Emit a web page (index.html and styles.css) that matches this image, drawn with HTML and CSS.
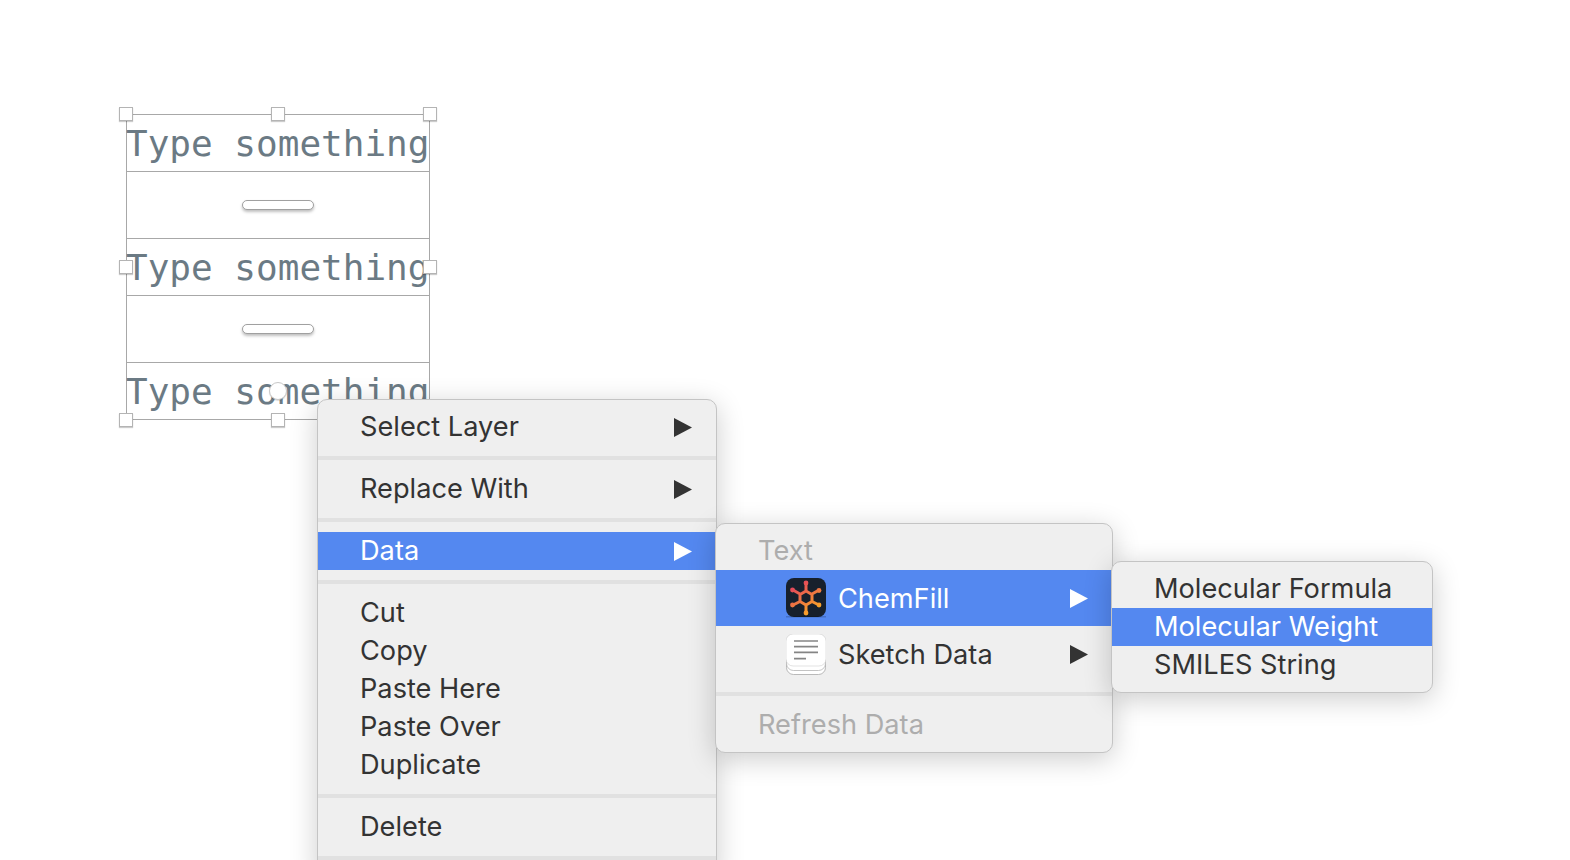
FILE: index.html
```html
<!DOCTYPE html>
<html lang="en">
<head>
  <meta charset="UTF-8" />
  <title>ChemFill context menu</title>
  <link rel="stylesheet" href="styles.css">
</head>
<body>
  <!-- Selected layer group on the canvas -->
  <div class="selection">
    <div class="text-row">Type something</div>
    <div class="pill-row"><span class="pill"></span></div>
    <div class="text-row">Type something</div>
    <div class="pill-row"><span class="pill"></span></div>
    <div class="text-row last">Type something</div>
    <span class="handle h-tl"></span>
    <span class="handle h-tc"></span>
    <span class="handle h-tr"></span>
    <span class="handle h-ml"></span>
    <span class="handle h-mr"></span>
    <span class="handle h-bl"></span>
    <span class="handle h-bc"></span>
    <span class="rotate"></span>
  </div>

  <!-- Main context menu -->
  <div class="menu menu-main">
    <div class="item">Select Layer
      <svg class="arrow" viewBox="0 0 18 19"><polygon points="0,0 18,9.5 0,19" /></svg>
    </div>
    <div class="sep"></div>
    <div class="item">Replace With
      <svg class="arrow" viewBox="0 0 18 19"><polygon points="0,0 18,9.5 0,19" /></svg>
    </div>
    <div class="sep"></div>
    <div class="item active">Data
      <svg class="arrow" viewBox="0 0 18 19"><polygon points="0,0 18,9.5 0,19" /></svg>
    </div>
    <div class="sep"></div>
    <div class="item">Cut</div>
    <div class="item">Copy</div>
    <div class="item">Paste Here</div>
    <div class="item">Paste Over</div>
    <div class="item">Duplicate</div>
    <div class="sep"></div>
    <div class="item">Delete</div>
    <div class="sep"></div>
  </div>

  <!-- Data submenu -->
  <div class="menu menu-data">
    <div class="item disabled">Text</div>
    <div class="item tall active">
      <svg class="app-icon" viewBox="0 0 40 41">
        <defs>
          <linearGradient id="chem" gradientUnits="userSpaceOnUse" x1="6" y1="5" x2="26" y2="36">
            <stop offset="0" stop-color="#e23c62" />
            <stop offset="1" stop-color="#fba925" />
          </linearGradient>
        </defs>
        <rect x="0" y="0" width="40" height="39" rx="8" fill="#17202c" />
        <rect x="0" y="38" width="40" height="1.5" fill="#000" opacity="0.18" />
        <g fill="url(#chem)">
          <path fill="none" stroke="url(#chem)" stroke-width="3" d="M20 5V13M7 12L14 16M33 12L26 16M7 27L14 23.5M33 27L26 23.5M20 35V26.5M20 13L26 16.5V23.5L20 27L14 23.5V16.5Z" />
          <circle cx="20" cy="5" r="2.4" />
          <circle cx="6.5" cy="12" r="2.4" />
          <circle cx="33" cy="12.5" r="2.4" />
          <circle cx="6.5" cy="27" r="2.4" />
          <circle cx="33" cy="27" r="2.4" />
          <circle cx="20" cy="35" r="2.4" />
        </g>
      </svg>
      ChemFill
      <svg class="arrow" viewBox="0 0 18 19"><polygon points="0,0 18,9.5 0,19" /></svg>
    </div>
    <div class="item tall">
      <svg class="app-icon" viewBox="0 0 40 41">
        <rect x="0.5" y="10" width="39" height="30.5" rx="7" fill="#fff" stroke="#a8a8a8" stroke-width="0.8" />
        <rect x="0.5" y="6" width="39" height="30.5" rx="7" fill="#fff" stroke="#b4b4b4" stroke-width="0.8" />
        <rect x="0" y="0" width="40" height="32" rx="7" fill="#fff" stroke="#c4c4c4" stroke-width="0.5" />
        <path stroke="#858585" stroke-width="1.7" d="M8 7H32M8 12.7H32M8 18.3H32M8 24.7H20" />
      </svg>
      Sketch Data
      <svg class="arrow" viewBox="0 0 18 19"><polygon points="0,0 18,9.5 0,19" /></svg>
    </div>
    <div class="sep"></div>
    <div class="item disabled">Refresh Data</div>
  </div>

  <!-- ChemFill submenu -->
  <div class="menu menu-chem">
    <div class="item">Molecular Formula</div>
    <div class="item active">Molecular Weight</div>
    <div class="item">SMILES String</div>
  </div>
</body>
</html>
```

FILE: styles.css
```css
html, body {
  height: 860px;
  margin: 0;
  overflow: hidden;
  background-color: #ffffff;
}
body {
  position: relative;
  font-family: Inter, "Liberation Sans", sans-serif;
}

/* Selection on the canvas */
.selection {
  position: absolute;
  left: 126px;
  top: 114px;
  width: 302px;
  border: 1px solid #a8a8a8;
}
.text-row {
  height: 56px;
  border-bottom: 1px solid #a8a8a8;
  font-family: "DejaVu Sans Mono", monospace;
  font-size: 36px;
  line-height: 58px;
  text-indent: -1px;
  color: #6b7a84;
  white-space: nowrap;
}
.text-row.last {
  border-bottom: 0;
}
.pill-row {
  display: flex;
  align-items: center;
  justify-content: center;
  height: 66px;
  border-bottom: 1px solid #a8a8a8;
}
.pill {
  width: 70px;
  height: 8px;
  background-color: #ffffff;
  border: 1px solid #a0a0a0;
  border-radius: 5px;
  box-shadow: 0 2px 3px rgba(0, 0, 0, 0.25);
}
.handle {
  position: absolute;
  width: 12px;
  height: 12px;
  background-color: #ffffff;
  border: 1px solid #b4b4b4;
  box-shadow: 0 1px 1px rgba(0, 0, 0, 0.2);
}
.h-tl { left: -8px; top: -8px; }
.h-tc { left: 144px; top: -8px; }
.h-tr { right: -8px; top: -8px; }
.h-ml { left: -8px; top: 145px; }
.h-mr { right: -8px; top: 145px; }
.h-bl { left: -8px; bottom: -8px; }
.h-bc { left: 144px; bottom: -8px; }
.rotate {
  position: absolute;
  left: 142px;
  top: 267px;
  width: 16px;
  height: 16px;
  background-color: #ffffff;
  border: 1px solid #c8c8c8;
  border-radius: 50%;
  box-shadow: 0 1px 1px rgba(0, 0, 0, 0.15);
}

/* Menus */
.menu {
  position: absolute;
  box-sizing: border-box;
  padding: 8px 0;
  background-color: #efefef;
  border: 1px solid #c4c4c4;
  border-radius: 10px;
  box-shadow: 0 6px 28px rgba(0, 0, 0, 0.2);
  color: #333333;
  font-size: 27.2px;
}
.menu-main { left: 317px; top: 399px; width: 400px; }
.menu-data { left: 715px; top: 523px; width: 398px; }
.menu-chem { left: 1111px; top: 561px; width: 322px; }
.item {
  display: flex;
  align-items: center;
  box-sizing: border-box;
  height: 38px;
  padding: 0 24px 2px 42px;
  white-space: nowrap;
}
.item.tall {
  height: 56px;
  padding: 0 24px 0 70px;
}
.item.active {
  background-color: #5488f0;
  color: #ffffff;
}
.item.disabled {
  color: #adadad;
}
.sep {
  height: 4px;
  margin: 10px 0;
  background-color: #e1e1e1;
}
.arrow {
  width: 18px;
  height: 19px;
  margin-left: auto;
  position: relative;
  top: 1px;
  fill: currentColor;
}
.item.tall .arrow {
  top: 0;
}
.app-icon {
  width: 40px;
  height: 41px;
  margin-right: 12px;
  flex: none;
}
```
